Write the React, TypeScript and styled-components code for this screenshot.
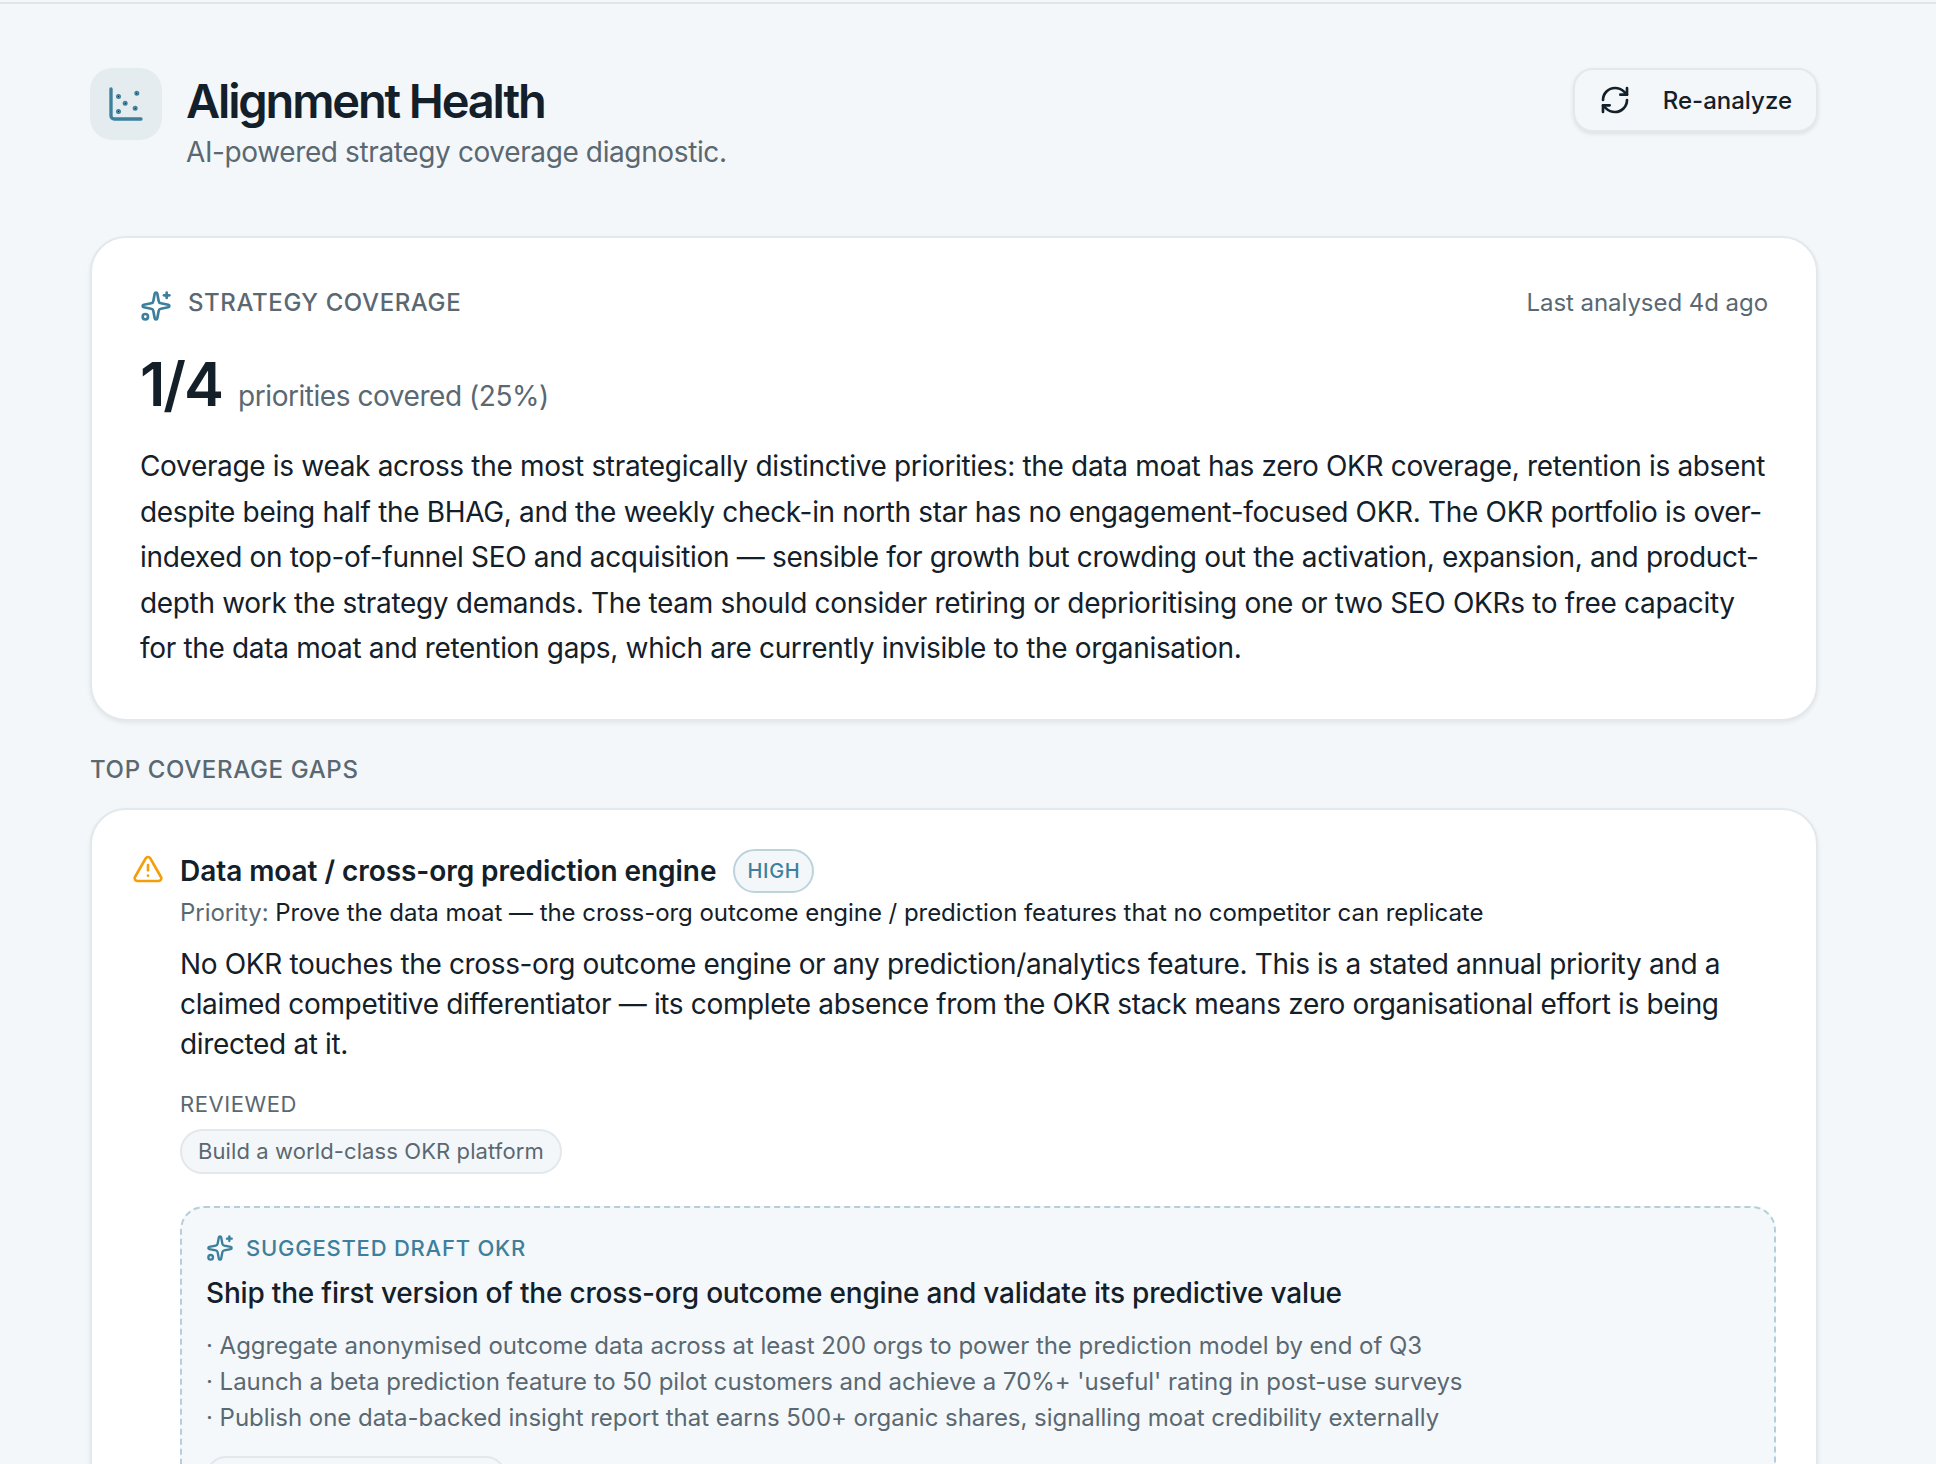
import React from "react";
import styled, { createGlobalStyle } from "styled-components";
import { AlertTriangle, RefreshCw, ChartScatter, Sparkles } from "lucide-react";

const GlobalStyle = createGlobalStyle`
    html, body {
        margin: 0;
        height: 100%;
        background: #f4f7f9;
    }
    body {
        font-family: "Inter", "Liberation Sans", sans-serif;
        color: #13202a;
        overflow: hidden;
    }
`;

const bullets = [
    "Aggregate anonymised outcome data across at least 200 orgs to power the prediction model by end of Q3",
    "Launch a beta prediction feature to 50 pilot customers and achieve a 70%+ 'useful' rating in post-use surveys",
    "Publish one data-backed insight report that earns 500+ organic shares, signalling moat credibility externally",
];

export default function App() {
    return (
        <>
            <GlobalStyle />
            <Page>
                <TopLine />
                <Content>
                    <Header>
                        <TitleGroup>
                            <IconTile>
                                <ChartScatter size={40} strokeWidth={2} color="#3d7f9c" />
                            </IconTile>
                            <div>
                                <Title>Alignment Health</Title>
                                <Subtitle>AI-powered strategy coverage diagnostic.</Subtitle>
                            </div>
                        </TitleGroup>
                        <ReanalyzeButton type="button">
                            <RefreshCw size={32} strokeWidth={2} />
                            Re-analyze
                        </ReanalyzeButton>
                    </Header>

                    <SummaryCard>
                        <SummaryTop>
                            <Eyebrow>
                                <Sparkles size={32} strokeWidth={2} color="#3d7f9c" />
                                STRATEGY COVERAGE
                            </Eyebrow>
                            <Muted>Last analysed 4d ago</Muted>
                        </SummaryTop>
                        <ScoreRow>
                            <Score>1/4</Score>
                            <ScoreNote>priorities covered (25%)</ScoreNote>
                        </ScoreRow>
                        <SummaryText>
                            Coverage is weak across the most strategically distinctive priorities: the data moat has zero OKR coverage, retention is absent despite being half the BHAG, and the weekly check-in north star has no engagement-focused OKR. The OKR portfolio is over-indexed on top-of-funnel SEO and acquisition — sensible for growth but crowding out the activation, expansion, and product-depth work the strategy demands. The team should consider retiring or deprioritising one or two SEO OKRs to free capacity for the data moat and retention gaps, which are currently invisible to the organisation.
                        </SummaryText>
                    </SummaryCard>

                    <SectionLabel>TOP COVERAGE GAPS</SectionLabel>

                    <GapCard>
                        <GapIcon>
                            <AlertTriangle size={32} strokeWidth={2} color="#f59e0b" />
                        </GapIcon>
                        <GapBody>
                            <GapTitleRow>
                                <GapTitle>Data moat / cross-org prediction engine</GapTitle>
                                <SeverityBadge>HIGH</SeverityBadge>
                            </GapTitleRow>
                            <PriorityLine>
                                <span>Priority: </span>Prove the data moat — the cross-org outcome engine / prediction features that no competitor can replicate
                            </PriorityLine>
                            <GapText>
                                No OKR touches the cross-org outcome engine or any prediction/analytics feature. This is a stated annual priority and a claimed competitive differentiator — its complete absence from the OKR stack means zero organisational effort is being directed at it.
                            </GapText>
                            <ReviewedLabel>REVIEWED</ReviewedLabel>
                            <Chip>Build a world-class OKR platform</Chip>
                            <DraftBox>
                                <DraftLabel>
                                    <Sparkles size={28} strokeWidth={2} color="#3d7f9c" />
                                    SUGGESTED DRAFT OKR
                                </DraftLabel>
                                <DraftTitle>Ship the first version of the cross-org outcome engine and validate its predictive value</DraftTitle>
                                <BulletList>
                                    {bullets.map((b) => (
                                        <li key={b}>· {b}</li>
                                    ))}
                                </BulletList>
                                <DraftAction type="button" />
                            </DraftBox>
                        </GapBody>
                    </GapCard>
                </Content>
            </Page>
        </>
    );
}

const Page = styled.div`
    height: 1464px;
    overflow: hidden;
    padding-top: 2px;
    box-sizing: border-box;
`;

const TopLine = styled.div`
    height: 2px;
    background: #dfe6ea;
`;

const Content = styled.main`
    padding: 64px 118px 0 90px;
`;

const Header = styled.header`
    display: flex;
    justify-content: space-between;
    align-items: flex-start;
    margin-bottom: 64px;
`;

const TitleGroup = styled.div`
    display: flex;
    gap: 24px;
`;

const IconTile = styled.div`
    width: 72px;
    height: 72px;
    border-radius: 22px;
    background: #e4ecf0;
    display: flex;
    align-items: center;
    justify-content: center;
`;

const Title = styled.h1`
    margin: 0;
    font-size: 47px;
    line-height: 66px;
    font-weight: 600;
    letter-spacing: -2.15px;
    color: #13202a;
`;

const Subtitle = styled.p`
    margin: -2px 0 0;
    font-size: 28px;
    line-height: 40px;
    letter-spacing: -0.38px;
    color: #5a6872;
`;

const ReanalyzeButton = styled.button`
    display: flex;
    align-items: center;
    gap: 32px;
    height: 64px;
    padding: 0 24px;
    box-sizing: border-box;
    border: 2px solid #e2e8ec;
    border-radius: 20px;
    background: #f4f7f9;
    box-shadow: 0 2px 4px rgba(19, 32, 42, 0.1);
    font-family: inherit;
    font-size: 24px;
    font-weight: 500;
    color: #13202a;
`;

const Card = styled.section`
    background: #fff;
    border: 2px solid #e2e8ec;
    border-radius: 36px;
    box-shadow: 0 2px 4px rgba(19, 32, 42, 0.08);
`;

const SummaryCard = styled(Card)`
    padding: 48px 48px 47px;
`;

const SummaryTop = styled.div`
    display: flex;
    justify-content: space-between;
    align-items: center;
`;

const Eyebrow = styled.div`
    display: flex;
    align-items: center;
    gap: 16px;
    font-size: 24px;
    font-weight: 500;
    letter-spacing: 0.6px;
    color: #5a6872;

    svg {
        transform: translateY(4px);
    }
`;

const Muted = styled.span`
    font-size: 24px;
    letter-spacing: -0.05px;
    color: #5a6872;
`;

const ScoreRow = styled.div`
    display: flex;
    align-items: baseline;
    gap: 16px;
    margin-top: 30px;
`;

const Score = styled.span`
    font-size: 60px;
    line-height: 72px;
    font-weight: 600;
    letter-spacing: -2px;
`;

const ScoreNote = styled.span`
    font-size: 28px;
    letter-spacing: -0.45px;
    color: #5a6872;
`;

const SummaryText = styled.p`
    margin: 24px 0 0;
    font-size: 28px;
    line-height: 45.6px;
    letter-spacing: -0.33px;
    color: #13202a;
`;

const SectionLabel = styled.h2`
    margin: 33px 0 22px;
    font-size: 24px;
    line-height: 32px;
    font-weight: 500;
    letter-spacing: 0.65px;
    color: #5a6872;
`;

const GapCard = styled(Card)`
    display: flex;
    gap: 16px;
    padding: 39px 40px 40px;
`;

const GapIcon = styled.div`
    flex: none;
    width: 32px;
    margin-top: 4px;
`;

const GapBody = styled.div`
    flex: 1;
    min-width: 0;
`;

const GapTitleRow = styled.div`
    display: flex;
    align-items: center;
    gap: 17px;
`;

const GapTitle = styled.h3`
    margin: 0;
    font-size: 28px;
    line-height: 40px;
    font-weight: 600;
    letter-spacing: -0.06px;
`;

const SeverityBadge = styled.span`
    border: 2px solid #bcd3de;
    border-radius: 999px;
    background: #f4f7f9;
    padding: 4px 12px;
    font-size: 20px;
    line-height: 32px;
    font-weight: 500;
    letter-spacing: 0.7px;
    color: #3d7f9c;
`;

const PriorityLine = styled.p`
    margin: 2px 0 0;
    font-size: 24px;
    line-height: 36px;
    letter-spacing: -0.04px;
    color: #13202a;

    span {
        color: #5a6872;
    }
`;

const GapText = styled.p`
    margin: 13px 0 0;
    font-size: 28px;
    line-height: 40px;
    letter-spacing: -0.35px;
`;

const ReviewedLabel = styled.div`
    margin-top: 24px;
    font-size: 22px;
    line-height: 32px;
    letter-spacing: 0.55px;
    color: #5a6872;
`;

const Chip = styled.span`
    display: inline-block;
    margin-top: 9px;
    border: 2px solid #e2e8ec;
    border-radius: 999px;
    background: #f4f7f9;
    padding: 4px 16px;
    font-size: 22px;
    line-height: 33px;
    letter-spacing: 0.1px;
    color: #5a6872;
`;

const DraftBox = styled.div`
    margin-top: 32px;
    padding: 24px;
    border: 2px dashed #b4cfdb;
    border-radius: 24px;
    background: #f4f8fa;
`;

const DraftLabel = styled.div`
    display: flex;
    align-items: center;
    gap: 12px;
    font-size: 22px;
    line-height: 32px;
    font-weight: 500;
    letter-spacing: 0.77px;
    color: #3d7f9c;
`;

const DraftTitle = styled.div`
    margin-top: 9px;
    font-size: 28px;
    line-height: 40px;
    font-weight: 500;
    letter-spacing: -0.19px;
`;

const BulletList = styled.ul`
    margin: 15px 0 0;
    padding: 0;
    list-style: none;
    font-size: 24px;
    line-height: 36px;
    letter-spacing: -0.03px;
    color: #5a6872;
`;

const DraftAction = styled.button`
    display: block;
    width: 300px;
    height: 48px;
    margin-top: 20px;
    border: 2px solid #e2e8ec;
    border-radius: 20px;
    background: #f4f7f9;
`;
